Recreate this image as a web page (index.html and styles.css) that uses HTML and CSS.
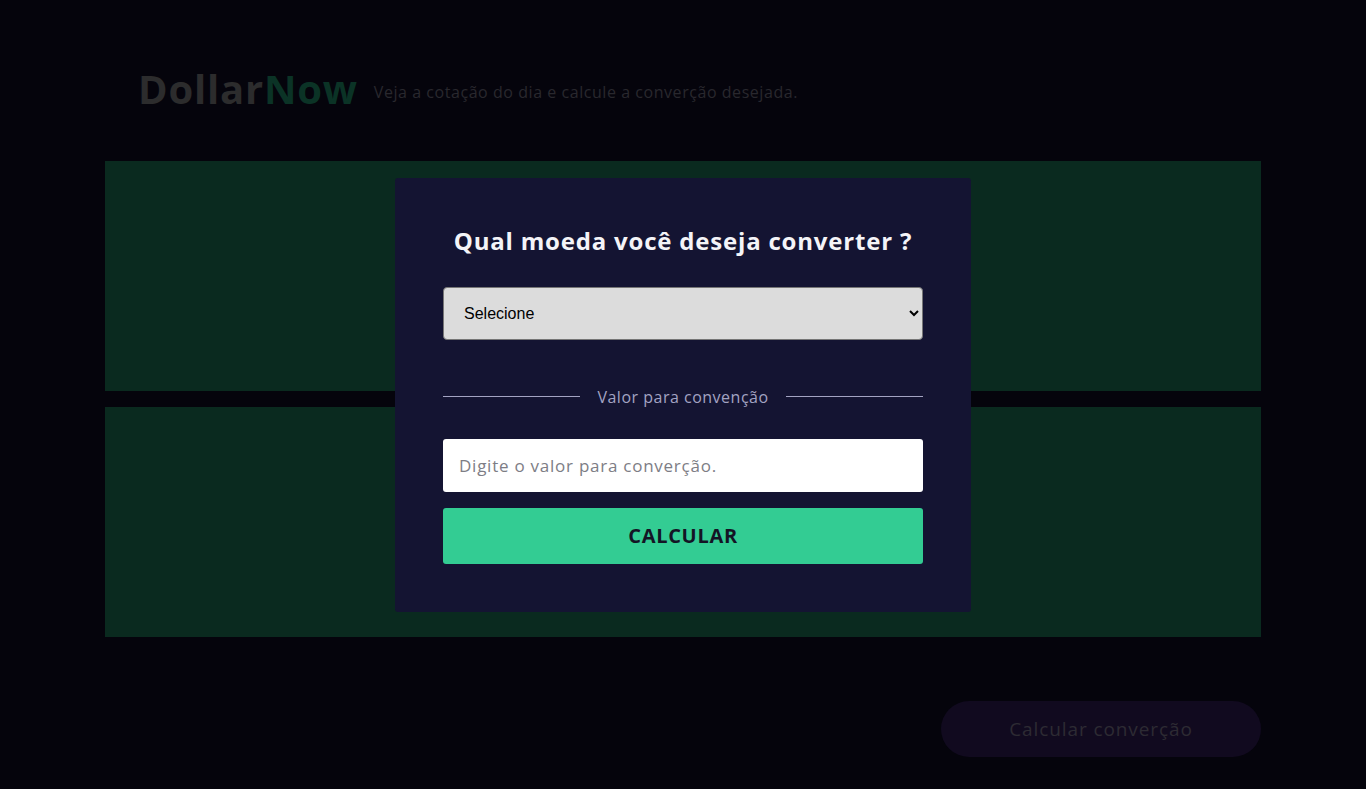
FILE: index.html
```html
<!DOCTYPE html>
<html lang="pt-BR">
<head>
<meta charset="utf-8">
<title>DollarNow</title>
<link rel="stylesheet" href="styles.css">
</head>
<body>
<div class="page">
  <header class="header">
    <h1 class="logo"><span class="logo-dollar">Dollar</span><span class="logo-now">Now</span></h1>
    <p class="tagline">Veja a cotação do dia e calcule a converção desejada.</p>
  </header>
  <main class="panels">
    <section class="panel"></section>
    <section class="panel"></section>
  </main>
  <div class="actions">
    <button class="open-btn" type="button">Calcular converção</button>
  </div>
</div>

<div class="overlay">
  <div class="modal">
    <h2 class="modal-title">Qual moeda você deseja converter ?</h2>
    <select class="currency">
      <option>Selecione</option>
      <option>Dólar</option>
      <option>Euro</option>
    </select>
    <div class="divider"><span>Valor para convenção</span></div>
    <input class="amount" type="text" placeholder="Digite o valor para converção.">
    <button class="calc-btn" type="button">CALCULAR</button>
  </div>
</div>
</body>
</html>
```

FILE: styles.css
```css
* { box-sizing: border-box; }
html, body { margin: 0; padding: 0; }
body {
  background: #05040c;
  font-family: "Open Sans", "Noto Sans", sans-serif;
  width: 1366px;
  height: 789px;
  overflow: hidden;
}
.page {
  width: 1156px;
  margin: 0 auto;
  padding-top: 64px;
}
.header {
  display: flex;
  align-items: center;
  padding-left: 33px;
  height: 50px;
  margin-bottom: 47px;
}
.logo {
  margin: 0;
  font-size: 40px;
  font-weight: 700;
  letter-spacing: 0.8px;
  line-height: 50px;
}
.logo-dollar { color: #2c2c2d; }
.logo-now { color: #0b3326; }
.tagline {
  margin: 6px 0 0 16px;
  color: #29282e;
  font-size: 16px;
  letter-spacing: 0.55px;
}
.panels {
  display: flex;
  flex-direction: column;
  gap: 16px;
}
.panel {
  height: 230px;
  background: #0a2a1f;
}
.actions {
  display: flex;
  justify-content: flex-end;
  margin-top: 64px;
}
.open-btn {
  width: 320px;
  height: 56px;
  border: none;
  border-radius: 28px;
  background: #110a1f;
  color: #2d2b33;
  font-family: "Open Sans", "Noto Sans", sans-serif;
  font-size: 19px;
  letter-spacing: 0.9px;
}
.overlay {
  position: fixed;
  inset: 0;
  display: flex;
  align-items: center;
  justify-content: center;
}
.modal {
  width: 576px;
  height: 434px;
  background: #141432;
  border-radius: 3px;
  padding: 48px;
  display: flex;
  flex-direction: column;
}
.modal-title {
  margin: 0;
  text-align: center;
  color: #f4f4f8;
  font-size: 24px;
  font-weight: 700;
  letter-spacing: 0.8px;
  line-height: 30px;
}
.currency {
  margin-top: 31px;
  height: 53px;
  width: 100%;
  background-color: #dcdcdc;
  border: 1px solid #767676;
  border-radius: 4px;
  padding: 0 16px;
  font-family: "Liberation Sans", Arial, sans-serif;
  font-size: 16px;
  color: #000;
}
.divider {
  margin-top: 47px;
  height: 20px;
  display: flex;
  align-items: center;
  gap: 17px;
  color: #a3a3c2;
  font-size: 16px;
  letter-spacing: 0.5px;
}
.divider::before,
.divider::after {
  content: "";
  flex: 1;
  height: 1px;
  background: #a3a3c2;
}
.amount {
  margin-top: 32px;
  height: 53px;
  width: 100%;
  border: none;
  border-radius: 3px;
  background: #fff;
  padding: 0 16px;
  font-family: "Open Sans", "Noto Sans", sans-serif;
  font-size: 17px;
  letter-spacing: 0.75px;
}
.amount::placeholder { color: #7d7d85; }
.calc-btn {
  margin-top: 16px;
  height: 56px;
  width: 100%;
  border: none;
  border-radius: 3px;
  background: #33cc93;
  color: #141425;
  font-family: "Open Sans", "Noto Sans", sans-serif;
  font-size: 20px;
  font-weight: 700;
  letter-spacing: 0.7px;
}
```
